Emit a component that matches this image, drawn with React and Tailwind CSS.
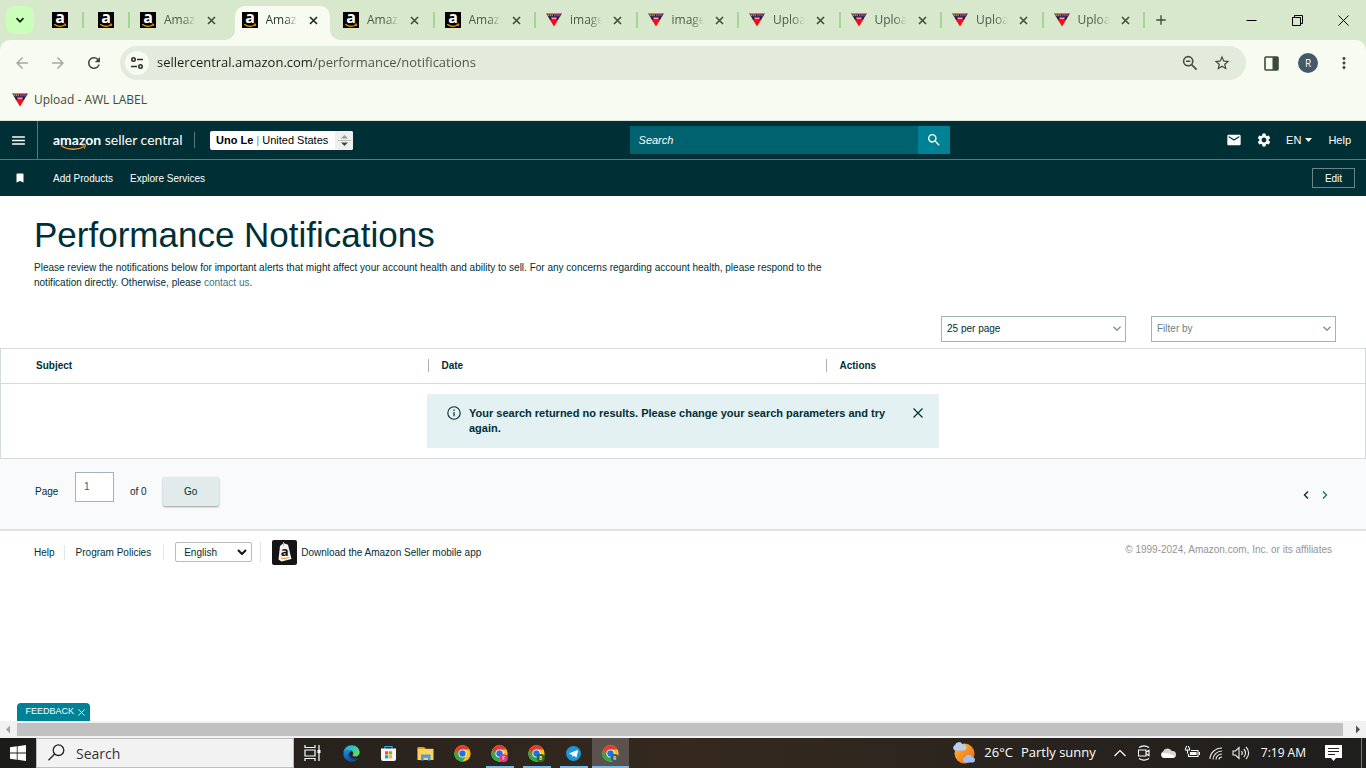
import { useState } from 'react'
import {
  MdAdd,
  MdArrowBack,
  MdArrowForward,
  MdBookmark,
  MdMail,
  MdMenu,
  MdMoreVert,
  MdRefresh,
  MdSearch,
  MdSettings,
  MdStarBorder
} from 'react-icons/md'

const tabs = [
  { id: 1, title: 'Amazon', icon: 'amazon' },
  { id: 2, title: 'Amazon', icon: 'amazon', active: true },
  { id: 3, title: 'Amazon', icon: 'amazon' },
  { id: 4, title: 'Amazon', icon: 'amazon' },
  { id: 5, title: 'images', icon: 'awl' },
  { id: 6, title: 'images', icon: 'awl' },
  { id: 7, title: 'Upload', icon: 'awl' },
  { id: 8, title: 'Upload', icon: 'awl' },
  { id: 9, title: 'Upload', icon: 'awl' },
  { id: 10, title: 'Upload', icon: 'awl' }
]

function AmazonIcon() {
  return (
    <svg viewBox="0 0 16 16" className="size-4 shrink-0 overflow-visible" aria-hidden="true">
      <rect width="16" height="16" fill="#000" />
      <text x="8" y="11" textAnchor="middle" fontSize="16" fontWeight="700" fontFamily="Open Sans, sans-serif" fill="#fff">a</text>
      <path d="M2.2 12.2c3.4 2.6 7.6 2.7 11 .6" fill="none" stroke="#f90" strokeWidth="1.2" />
      <path d="M11.6 12.2l2.2-.2-.5 2" fill="none" stroke="#f90" strokeWidth=".9" />
    </svg>
  )
}

function AwlIcon() {
  return (
    <svg viewBox="0 0 16 16" className="size-4 shrink-0" aria-hidden="true">
      <path d="M.2 1.200h15.600L14 4.700H2z" fill="#3a0d30" />
      <path d="M.6 1.700h14.800" stroke="#e58a80" strokeWidth="1" />
      <path d="M1.600 3.200h5.800" stroke="#e3b04b" strokeWidth="1.200" strokeDasharray="1.4 .6" />
      <path d="M8 3.200h6.200" stroke="#d84fa0" strokeWidth="1.200" strokeDasharray="1.6 .5" />
      <path d="M2 4.500h12L12 8H4z" fill="#1d1650" />
      <path d="M5 5.600h6L10 7.600H6z" fill="#f3a0b4" />
      <path d="M3.700 7.400h8.600L8 14.600z" fill="#fb0a14" />
    </svg>
  )
}

function ChromeIcon({ badge, badgeColor }) {
  return (
    <svg viewBox="0 0 48 48" className="size-[17px] overflow-visible" aria-hidden="true">
      <circle cx="24" cy="24" r="23" fill="#fbc116" />
      <path d="M4.1 12.5A23 23 0 0 0 24 47L34 29.8 24 24 14 29.8z" fill="#2da94f" />
      <path d="M4.1 12.5A23 23 0 0 1 43.9 12.5H24L14 18v11.800z" fill="#e33b2e" />
      <circle cx="24" cy="24" r="11.5" fill="#fff" />
      <circle cx="24" cy="24" r="9" fill="#1a73e8" />
      {badge && (
        <>
          <circle cx="36" cy="37" r="11.5" fill={badgeColor} />
          <text x="36" y="41.500" textAnchor="middle" fontSize="13" fontWeight="700" fontFamily="Roboto, sans-serif" fill="#ddd">{badge}</text>
        </>
      )}
    </svg>
  )
}

function EdgeIcon() {
  return (
    <svg viewBox="0 0 24 24" className="size-[17px]" aria-hidden="true">
      <defs>
        <linearGradient id="edge-top" x1="0" y1="0" x2="1" y2=".5">
          <stop offset="0" stopColor="#1fa4e8" />
          <stop offset=".6" stopColor="#2cc6c4" />
          <stop offset="1" stopColor="#5fdc5a" />
        </linearGradient>
        <linearGradient id="edge-low" x1="0" y1="0" x2="0" y2="1">
          <stop offset="0" stopColor="#1c8fe0" />
          <stop offset="1" stopColor="#0c4fa5" />
        </linearGradient>
      </defs>
      <path d="M.6 11C1.400 4.800 6.200.5 12.200.5 19 .5 23.500 5.500 23.500 10.600c0 3.300-2.500 5.600-5.800 5.600-2.400 0-4.200-.9-4.200-1.800 0-.6 1-1.100 1-2.800 0-2.500-2.700-4.600-6-4.600C4.800 7 2 8.700.6 11z" fill="url(#edge-top)" />
      <path d="M.5 12.500C1.300 9.300 4.500 7 8.500 7c1.700 0 3.200.5 4.300 1.400C9.800 8.800 8 11.300 8 14.200c0 4 3.300 6.700 7.300 6.700 2.300 0 4.300-.6 6.200-1.900C19.500 21.800 16 23.500 12.200 23.500 5.500 23.500.2 18.500.5 12.500z" fill="url(#edge-low)" />
      <path d="M8.500 10.800c-2 4.600.6 10 6.800 10.100 2.300 0 4.300-.6 6.200-1.900-5.500 1.400-12-1.200-13-8.200z" fill="#114a8b" />
    </svg>
  )
}

function StoreIcon() {
  return (
    <svg viewBox="0 0 17 17" className="size-[17px]" aria-hidden="true">
      <path d="M5 4V1.500h7V4" fill="none" stroke="#33a8f0" strokeWidth="1.200" />
      <path d="M1 3.500h15V14a2 2 0 0 1-2 2H3a2 2 0 0 1-2-2z" fill="#f5f5f5" />
      <path d="M5 6.300h3.200v3.200H5z" fill="#f25022" />
      <path d="M8.900 6.300h3.200v3.200H8.900z" fill="#7fba00" />
      <path d="M5 10.200h3.200v3.200H5z" fill="#00a4ef" />
      <path d="M8.900 10.200h3.200v3.200H8.900z" fill="#ffb900" />
    </svg>
  )
}

function FolderIcon() {
  return (
    <svg viewBox="0 0 17 17" className="size-[17px]" aria-hidden="true">
      <path d="M.5 2h6.700l1.300 1.700V5H.5z" fill="#dd9a12" />
      <path d="M.5 3.800h16V15H.5z" fill="#ffd45e" />
      <path d="M4 15.500V9.600h9.500v5.900h-2.600V12.800H6.600v2.700z" fill="#4a9be0" />
    </svg>
  )
}

function TelegramIcon() {
  return (
    <svg viewBox="0 0 16 16" className="size-[15px]" aria-hidden="true">
      <circle cx="8" cy="8" r="8" fill="#1c96d9" />
      <path d="M3 7.900l9.300-3.700c.4-.2.700.1.600.6l-1.500 6.900c-.1.500-.4.600-.8.400L8.300 10.400l-1.200 1.200-.4-2.100z" fill="#fff" />
      <path d="M6.700 9.500l4.400-3.700L7.500 9.900l-.4 1.700z" fill="#b9dcf0" />
    </svg>
  )
}

function WeatherIcon() {
  return (
    <svg viewBox="0 0 24 24" className="size-6" aria-hidden="true">
      <defs>
        <linearGradient id="sun" x1="0" y1="0" x2="1" y2="1">
          <stop offset="0" stopColor="#fdbb2c" />
          <stop offset="1" stopColor="#f0641e" />
        </linearGradient>
      </defs>
      <circle cx="12.500" cy="12.500" r="10" fill="url(#sun)" />
      <path d="M3 9.500a3 3 0 0 1 0-5.500 4 4 0 0 1 7.500-.5 3 3 0 0 1 1.500 6z" fill="#b4cef5" />
      <path d="M13 21.500a2.700 2.700 0 0 1 0-5.200 4 4 0 0 1 7.300-.3 2.800 2.800 0 0 1 .7 5.500z" fill="#9dc1f7" />
    </svg>
  )
}

function Favicon({ name }) {
  return name === 'amazon' ? <AmazonIcon /> : <AwlIcon />
}

function TabStrip() {
  return (
    <div className="flex h-10 items-center overflow-hidden bg-[#d8e8cd] pl-[6px]">
      <button aria-label="Search tabs" className="mr-1 flex size-7 shrink-0 items-center justify-center rounded-[9px] bg-[#c9ffb8]">
        <svg viewBox="0 0 10 10" className="size-[10px]" fill="none" stroke="#1b2a18" strokeWidth="1.8">
          <path d="M1.500 3.200L5 6.700l3.500-3.500" />
        </svg>
      </button>
      {['Home', 'Orders'].map((name) => (
        <button key={name} aria-label={name} className="flex h-4 w-[46px] shrink-0 items-center border-r-2 border-[#a0d892] pl-[14px]">
          <AmazonIcon />
        </button>
      ))}
      <div className="flex h-full max-w-[1015px] flex-1">
        {tabs.map((tab) => (
          <Tab key={tab.id} tab={tab} line={tab.id > 2} />
        ))}
      </div>
      <button aria-label="New tab" className="ml-2 text-[#3c4a38]">
        <MdAdd size={16} />
      </button>
      <div className="ml-auto flex text-black">
        {['Minimize', 'Restore', 'Close'].map((name) => (
          <button key={name} aria-label={name} className="flex h-10 w-[46px] items-center justify-center">
            <svg viewBox="0 0 11 11" className="size-[11px]" fill="none" stroke="currentColor">
              {name === 'Minimize' && <path d="M.5 5.500h10" />}
              {name === 'Restore' && <path d="M.5 2.500h8v8h-8zM2.500 2.500v-2h8v8h-2" />}
              {name === 'Close' && <path d="M.5.5l10 10M10.500.5l-10 10" />}
            </svg>
          </button>
        ))}
      </div>
    </div>
  )
}

function Tab({ tab, line }) {
  return (
    <div className="relative flex h-full min-w-0 flex-1 items-center">
      {tab.active && (
        <div className="absolute inset-x-[3px] top-[6px] bottom-0 rounded-t-[10px] bg-[#f8fbf2]">
          <span className="absolute bottom-0 -left-[10px] size-[10px] rounded-br-[10px] shadow-[5px_5px_0_5px_#f8fbf2]" />
          <span className="absolute -right-[10px] bottom-0 size-[10px] rounded-bl-[10px] shadow-[-5px_5px_0_5px_#f8fbf2]" />
        </div>
      )}
      <div className={`relative flex h-4 w-full items-center pl-[10px] ${line ? 'border-r-2 border-[#a0d892]' : ''}`}>
        <Favicon name={tab.icon} />
        <span className={`ml-2 w-8 overflow-hidden mask-r-from-60% text-[12px] whitespace-nowrap ${tab.active ? 'text-[#2f3a2c]' : 'text-[#4c5b48]'}`}>
          {tab.title}
        </span>
        <button aria-label="Close tab" className={`ml-[11px] ${tab.active ? 'text-[#1b2a18]' : 'text-[#3f4f3b]'}`}>
          <svg viewBox="0 0 9 9" className="size-[9px]" stroke="currentColor" strokeWidth="1.600">
            <path d="M1 1l7 7M8 1L1 8" />
          </svg>
        </button>
      </div>
    </div>
  )
}

function Toolbar() {
  return (
    <div className="flex h-[46px] items-center text-[#3c4a38]">
      <button aria-label="Back" className="ml-[13px] w-9 text-[#a3aa9f]"><MdArrowBack size={18} /></button>
      <button aria-label="Forward" className="w-9 text-[#a3aa9f]"><MdArrowForward size={18} /></button>
      <button aria-label="Reload" className="w-[35px]"><MdRefresh size={18} /></button>
      <div className="flex h-[34px] flex-1 items-center rounded-full bg-[#e3ebdc] pl-[5px]">
        <button aria-label="Site information" className="flex size-6 items-center justify-center rounded-full bg-[#f8fbf2]">
          <svg viewBox="0 0 14 14" className="size-[14px]" fill="none" stroke="#2a3327" strokeWidth="1.600">
            <circle cx="3.500" cy="3.500" r="1.700" />
            <path d="M7 3.500h6M1 10.500h6" />
            <circle cx="10.500" cy="10.500" r="1.700" />
          </svg>
        </button>
        {/* the host part of the address is darker than the path */}
        <input
          aria-label="Address"
          defaultValue="sellercentral.amazon.com/performance/notifications"
          className="ml-2 flex-1 bg-linear-to-r from-[#1a1f18] from-[156px] to-[#4a5547] to-[156px] bg-clip-text text-[13px] text-transparent caret-black outline-none"
        />
        <button aria-label="Zoom" className="mr-[15px]">
          <svg viewBox="0 0 16 16" className="size-4" fill="none" stroke="#464f43" strokeWidth="1.600">
            <circle cx="6.200" cy="6.200" r="4.600" />
            <path d="M9.600 9.600l5 5M4 6.200h4.400" />
          </svg>
        </button>
        <button aria-label="Bookmark this tab" className="mr-[15px]"><MdStarBorder size={18} /></button>
      </div>
      <button aria-label="Side panel" className="ml-[18px]">
        <svg viewBox="0 0 15 15" className="size-[15px]">
          <rect x="1" y="1" width="13" height="13" rx="1" fill="none" stroke="#3c4a38" strokeWidth="1.600" />
          <rect x="8.500" y="1" width="5.500" height="13" fill="#3c4a38" />
        </svg>
      </button>
      <button className="ml-[19px] size-5 rounded-full bg-[#455a68] text-[10px] leading-5 text-white">R</button>
      <button aria-label="Menu" className="mr-[13px] ml-[17px]"><MdMoreVert size={18} /></button>
    </div>
  )
}

function SellerLogo() {
  return (
    <a href="#" className="relative ml-[15px] w-32 font-[Lato,sans-serif] text-[14px] leading-[18px] whitespace-nowrap text-white">
      <span className="font-bold">amazon</span> seller central
      <svg viewBox="0 0 28 7" className="absolute top-[13px] left-[7px] h-[7px] w-7" fill="none" stroke="#f3962a" aria-hidden="true">
        <path d="M1 1.500c7 4.800 16 5 23.500 1" strokeWidth="1.400" />
        <path d="M21.500 1.200l4-.4-1 4" strokeWidth="1" />
      </svg>
    </a>
  )
}

function SellerHeader() {
  return (
    <header className="bg-[#002f36] font-[Liberation_Sans,Arial,sans-serif] text-[11px] text-white">
      <div className="flex h-[39px] items-center justify-between border-b border-[#5a787c] pr-[15px]">
        <div className="flex h-full items-center">
          <button aria-label="Menu" className="flex h-full w-[38px] items-center justify-center border-r border-[#5a787c]">
            <MdMenu size={17} />
          </button>
          <SellerLogo />
          <div className="mr-[15px] ml-[13px] h-4 border-l border-[#5a787c]" />
          <button className="flex h-[19px] w-[143px] items-center justify-between rounded-xs bg-white pl-[6px] text-black">
            <span className="whitespace-nowrap">
              <b>Uno Le</b> <span className="text-[#3d9fc4]">|</span> United States
            </span>
            <span className="flex h-full w-[18px] items-center justify-center rounded-r-xs bg-[#efefef]">
              <svg viewBox="0 0 13 13" className="size-[13px]" aria-hidden="true">
                <path d="M3 4.500L6.500 1 10 4.500z" fill="#999" />
                <path d="M0 6.500h13" stroke="#bbb" />
                <path d="M3 8.500L6.500 12 10 8.500z" fill="#444" />
              </svg>
            </span>
          </button>
        </div>
        <form className="flex h-7" onSubmit={(e) => e.preventDefault()}>
          <input aria-label="Search" placeholder="Search" className="w-72 bg-[#00616f] px-[9px] italic outline-none placeholder:text-white" />
          <button aria-label="Submit search" className="flex w-8 items-center justify-center bg-[#008296]">
            <MdSearch size={16} />
          </button>
        </form>
        <div className="flex items-center">
          <button aria-label="Messages" className="mr-[14px]"><MdMail size={16} /></button>
          <button aria-label="Settings" className="mr-[14px]"><MdSettings size={16} /></button>
          <button className="mr-4 flex items-center gap-1">
            EN
            <svg viewBox="0 0 7 4" className="h-1 w-[7px]" fill="currentColor"><path d="M0 0h7L3.500 4z" /></svg>
          </button>
          <a href="#">Help</a>
        </div>
      </div>
      <nav className="flex h-9 items-center pr-[11px] text-[10px]">
        <button aria-label="Bookmarks" className="flex w-[39px] justify-center"><MdBookmark size={12} /></button>
        <a href="#" className="ml-[14px]">Add Products</a>
        <a href="#" className="ml-[17px]">Explore Services</a>
        <button className="ml-auto h-5 w-[43px] border border-[#6b8487]">Edit</button>
      </nav>
    </header>
  )
}

function FilterSelect({ label, options, className }) {
  return (
    <div className="relative w-[185px]">
      <select aria-label={label} className={`h-[26px] w-full appearance-none border border-[#a2b4b6] bg-white px-[5px] text-[10px] ${className}`}>
        {options.map((option) => <option key={option}>{option}</option>)}
      </select>
      <svg viewBox="0 0 8 5" className="pointer-events-none absolute top-[11px] right-[5px] h-[5px] w-2" fill="none" stroke="#7f9194" strokeWidth="1.400">
        <path d="M.5.7L4 4.200 7.500.7" />
      </svg>
    </div>
  )
}

function Notifications() {
  const [showAlert, setShowAlert] = useState(true)

  return (
    <main>
      <div className="px-[34px] pt-[18px]">
        <h1 className="text-[35px] leading-[42px]">Performance Notifications</h1>
        <p className="mt-1 max-w-[828px] text-[10px] leading-[15px]">
          Please review the notifications below for important alerts that might affect your account health and ability to sell. For any concerns regarding account health, please respond to the notification directly. Otherwise, please <a href="#" className="text-[#3a7382]">contact us</a>.
        </p>
      </div>

      <div className="mt-[25px] mb-[6px] flex justify-end gap-[25px] pr-[30px]">
        <FilterSelect label="Results per page" options={['25 per page', '50 per page']} className="text-[#002f36]" />
        <FilterSelect label="Filter by" options={['Filter by']} className="text-[#6b7f83]" />
      </div>

      <table className="w-full table-fixed border-collapse border border-[#d5dbdb]">
        <thead>
          <tr className="h-[35px] border-b border-[#d5dbdb] text-left text-[10px]">
            <th className="w-[427px] pl-[35px]">Subject</th>
            <th className="w-[398px]"><div className="border-l border-[#a2b4b6] pl-[13px] leading-[13px]">Date</div></th>
            <th><div className="border-l border-[#a2b4b6] pl-[13px] leading-[13px]">Actions</div></th>
          </tr>
        </thead>
        <tbody>
          <tr>
            <td colSpan={3} className="h-[75px]">
              {showAlert && (
                <div role="alert" className="mx-auto flex h-[54px] w-[512px] items-start bg-[#e3f1f2] pt-3 pl-5">
                  <svg viewBox="0 0 14 14" className="size-[14px] shrink-0" fill="none" stroke="#002f36">
                    <circle cx="7" cy="7" r="6.200" strokeWidth="1.100" />
                    <path d="M7 6v4.300M7 3.600v1.300" strokeWidth="1.200" />
                  </svg>
                  <p className="ml-2 w-[436px] text-[11px] leading-[15px] font-bold">
                    Your search returned no results. Please change your search parameters and try again.
                  </p>
                  <button aria-label="Dismiss" className="mt-[2px] ml-2" onClick={() => setShowAlert(false)}>
                    <svg viewBox="0 0 10 10" className="size-[10px]" stroke="#002f36" strokeWidth="1.200"><path d="M.5.5l9 9M9.500.5l-9 9" /></svg>
                  </button>
                </div>
              )}
            </td>
          </tr>
        </tbody>
      </table>

      <div className="flex h-[72px] items-start border-b-2 border-[#dfe1e2] bg-[#f8fafc] px-[35px] text-[10px]">
        <label htmlFor="page" className="mt-[25px] w-10 leading-[15px]">Page</label>
        <input id="page" defaultValue="1" className="mt-[13px] h-[30px] w-[39px] border border-[#a2b4b6] bg-white px-2 text-[#007185]" />
        <span className="mt-[25px] ml-4 leading-[15px]">of 0</span>
        <button className="mt-[18px] ml-4 h-[29px] w-[56px] rounded-xs bg-[#e2ebeb] shadow-[0_1px_2px_#999]">Go</button>
        <div className="mt-8 mr-[3px] ml-auto flex gap-[13px]">
          <button aria-label="Previous page">
            <svg viewBox="0 0 6 8" className="h-2 w-[6px]" fill="none" stroke="#002f36" strokeWidth="1.400"><path d="M5 .5L1.500 4 5 7.500" /></svg>
          </button>
          <button aria-label="Next page">
            <svg viewBox="0 0 6 8" className="h-2 w-[6px]" fill="none" stroke="#1b6f80" strokeWidth="1.400"><path d="M1 .5L4.500 4 1 7.500" /></svg>
          </button>
        </div>
      </div>
    </main>
  )
}

function Footer() {
  return (
    <footer className="flex h-[43px] items-center px-[34px] text-[10px]">
      <a href="#" className="border-r border-[#e3e6e6] pr-[9px]">Help</a>
      <a href="#" className="border-r border-[#e3e6e6] pr-3 pl-[11px]">Program Policies</a>
      <div className="border-r border-[#e3e6e6] pr-2 pl-[11px]">
        <div className="relative">
          <select aria-label="Language" className="h-5 w-[77px] appearance-none rounded-xs border border-[#bbb] bg-white px-2">
            <option>English</option>
          </select>
          <svg viewBox="0 0 10 6" className="pointer-events-none absolute top-[7px] right-[5px] h-[6px] w-[10px]" fill="none" stroke="#111" strokeWidth="2">
            <path d="M1 1l4 4 4-4" />
          </svg>
        </div>
      </div>
      <a href="#" className="ml-[11px] flex items-center gap-1">
        <svg viewBox="0 0 25 25" className="size-[25px]" aria-hidden="true">
          <rect width="25" height="25" rx="2" fill="#151515" />
          <path d="M8 6l3.500-3 4.500 1.700L19.500 19 9.500 21.500 6.500 19.500z" fill="#f4f4f4" />
          <path d="M11.500 5.500V2" stroke="#aaa" />
          <text x="12.600" y="15.500" textAnchor="middle" fontSize="13" fontWeight="700" fontFamily="Open Sans, sans-serif" fill="#111">a</text>
          <path d="M9 17.800c2.500 1.300 5.500 1 8-.8" fill="none" stroke="#f3962a" />
        </svg>
        Download the Amazon Seller mobile app
      </a>
      <span className="mb-[6px] ml-auto text-[#949494]">© 1999-2024, Amazon.com, Inc. or its affiliates</span>
    </footer>
  )
}

function TaskButton({ label, running, active, children }) {
  return (
    <button aria-label={label} className={`flex h-full w-[37px] flex-col items-center ${active ? 'bg-[#5c524d]' : ''}`}>
      <span className="flex flex-1 items-center">{children}</span>
      {running && <span className={`-mt-[2px] h-[2px] bg-[#76b9ed] ${active ? 'w-full' : 'w-7'}`} />}
    </button>
  )
}

function TrayIcons() {
  return (
    <div className="flex items-center gap-2">
      <svg viewBox="0 0 16 16" className="size-4" fill="none" stroke="#fff" strokeWidth="1.200"><path d="M2.500 11L8 5.500l5.500 5.500" /></svg>
      <svg viewBox="0 0 16 16" className="size-4" fill="none" stroke="#fff" strokeWidth="1.100">
        <path d="M3 2.500c3-2 7-2 10 0M3 13.500c3 2 7 2 10 0M2.500 5h7.500v6H2.500zM10 7.300l3-2v5.400l-3-2" />
      </svg>
      <svg viewBox="0 0 16 16" className="size-4"><path d="M3.500 13a3.500 3.500 0 0 1-.5-6.500A5 5 0 0 1 12 6a3.500 3.500 0 0 1 1 7z" fill="#d4d4d4" /><path d="M3.500 13a3.500 3.500 0 0 1-1.500-5L9 8.500l6.500 3L13 13z" fill="#fff" /></svg>
      <svg viewBox="0 0 16 16" className="size-4" fill="none" stroke="#fff" strokeWidth="1.100">
        <path d="M1.500 2.500v2.500h4V2.500M2.500 2.500V1M4.500 2.500V1M3.500 5v3.500M7 5.500h7v6H4.500V9M15.500 7v3" /><path d="M6.500 7.500h5.500v2H6.500z" fill="#fff" />
      </svg>
      <svg viewBox="0 0 16 16" className="size-4" fill="none" stroke="#eee" strokeWidth="1.100">
        <path d="M2 14C2 8 7.500 3 14 3M5 14.500C5 10 9 6 14 6M8 14.500C8 11.500 10.500 9 14 9M11 14.500c0-1.500 1-2.500 3-2.500" />
      </svg>
      <svg viewBox="0 0 18 16" className="h-4 w-[18px]" fill="none" stroke="#eee" strokeWidth="1.100">
        <path d="M1 6h2.500L7 2.500v11L3.500 10H1zM9.500 6c1 1.200 1 2.800 0 4M11.800 4c2.200 2.200 2.200 5.800 0 8M14 2c3.500 3.300 3.500 8.700 0 12" />
      </svg>
    </div>
  )
}

function Taskbar() {
  return (
    <div className="flex h-[30px] items-center bg-linear-to-r from-[#1b1c1a] via-[#35291f] via-50% to-[#1e1e1d] text-white">
      <button aria-label="Start" className="flex w-9 justify-center">
        <svg viewBox="0 0 16 16" className="size-4" fill="#fff"><path d="M0 2.300l6.800-1v6.300H0zM7.600 1.200L16 0v7.600H7.600zM0 8.400h6.800v6.300L0 13.700zM7.600 8.400H16V16l-8.400-1.200z" /></svg>
      </button>
      <div className="relative h-full w-[258px]">
        <input aria-label="Search" placeholder="Search" className="h-full w-full border border-[#bdbdbd] bg-[#f2f2f2] pl-[39px] text-[14px] text-[#333] outline-none placeholder:text-[#333]" />
        <svg viewBox="0 0 17 17" className="pointer-events-none absolute top-[6px] left-3 size-[17px]" fill="none" stroke="#222" strokeWidth="1.300">
          <circle cx="10.500" cy="6.200" r="5.300" /><path d="M6.700 10L.5 16.200" />
        </svg>
      </div>
      <TaskButton label="Task view">
        <svg viewBox="0 0 17 16" className="h-4 w-[17px]" fill="none" stroke="#fff" strokeWidth="1.200">
          <path d="M1 0v2.500h10V0M1 5h10v6H1zM1 16v-2.500h10V16M15 0v16" /><path d="M13.500 5h3v3h-3z" fill="#fff" stroke="none" />
        </svg>
      </TaskButton>
      <div className="ml-[2px] flex h-full">
        <TaskButton label="Edge"><EdgeIcon /></TaskButton>
        <TaskButton label="Store"><StoreIcon /></TaskButton>
        <TaskButton label="File Explorer"><FolderIcon /></TaskButton>
        <TaskButton label="Chrome"><ChromeIcon /></TaskButton>
        <TaskButton label="Chrome, profile F" running><ChromeIcon badge="F" badgeColor="#e8337f" /></TaskButton>
        <TaskButton label="Chrome, profile B" running><ChromeIcon badge="B" badgeColor="#2f6b1e" /></TaskButton>
        <TaskButton label="Telegram" running><TelegramIcon /></TaskButton>
        <TaskButton label="Chrome, profile R" running active><ChromeIcon badge="R" badgeColor="#455a68" /></TaskButton>
      </div>
      <div className="ml-auto flex h-full items-center whitespace-nowrap">
        <button className="mr-4 flex items-center gap-2 text-[13px]">
          <WeatherIcon />
          <span>26°C</span>
          <span>Partly sunny</span>
        </button>
        <TrayIcons />
        <span className="ml-[11px] text-[12px]">7:19 AM</span>
        <button aria-label="Notifications" className="ml-[19px]">
          <svg viewBox="0 0 17 16" className="h-4 w-[17px]"><path d="M0 0h17v13h-6l-2.500 3L6 13H0z" fill="#fff" /><path d="M3 3.500h11M3 6.500h11M3 9.500h7" stroke="#222" /></svg>
        </button>
        <div className="mr-1 ml-[19px] h-full border-l border-[#777]" />
      </div>
    </div>
  )
}

export default function App() {
  return (
    <div className="flex min-h-screen flex-col bg-white font-[Open_Sans,Noto_Sans,sans-serif]">
      <TabStrip />
      <div className="bg-[#d8e8cd]">
        <div className="h-[81px] rounded-t-[10px] border-b border-[#dfe5d8] bg-[#f8fbf2]">
          <Toolbar />
          <a href="#" className="flex h-7 items-center gap-[6px] pl-3 text-[12px] text-[#3f4a3c]">
            <AwlIcon />
            Upload - AWL LABEL
          </a>
        </div>
      </div>
      <SellerHeader />
      <div className="flex flex-1 flex-col font-[Liberation_Sans,Arial,sans-serif] text-[#002f36]">
        <Notifications />
        <Footer />
        <button className="mt-auto ml-[17px] flex h-[18px] w-[73px] items-center justify-end gap-1 rounded-t-sm bg-[#008296] pr-[5px] text-[9px] text-white">
          FEEDBACK
          <svg viewBox="0 0 7 7" className="size-[7px]" stroke="#fff"><path d="M.5.5l6 6M6.500.5l-6 6" /></svg>
        </button>
      </div>
      <div className="flex h-[17px] items-center bg-[#f1f1f1]">
        <svg viewBox="0 0 17 17" className="size-[17px]" fill="#a3a3a3"><path d="M10 4.500v8L6 8.500z" /></svg>
        <div className="h-[13px] flex-1 bg-[#c1c1c1]" />
        <svg viewBox="0 0 17 17" className="mx-[3px] size-[17px]" fill="#505050"><path d="M10 4.500v8l4-4z" /></svg>
      </div>
      <Taskbar />
    </div>
  )
}
